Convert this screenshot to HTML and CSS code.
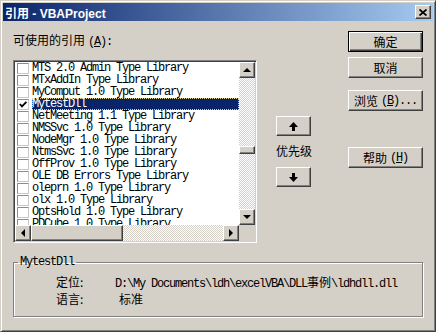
FILE: index.html
```html
<!DOCTYPE html>
<html>
<head>
<meta charset="utf-8">
<link rel="stylesheet" href="styles.css">
</head>
<body>
<div class="window">
  <div class="titlebar">
    <span class="title">引用 - VBAProject</span>
    <span class="close raised"><svg width="8" height="7" viewBox="0 0 8 7"><path d="M0.5 0.5 L7.5 6.5 M7.5 0.5 L0.5 6.5" stroke="#000" stroke-width="1.7" fill="none"/></svg></span>
  </div>
  <div class="body">
    <div class="main">
      <div class="leftcol">
        <div class="label">可使用的引用<span class="m acc">(<u>A</u>):</span></div>
        <div class="listbox">
          <div class="items m">
            <div class="row"><span class="cb"></span><span class="txt">MTS 2.0 Admin Type Library</span></div>
            <div class="row"><span class="cb"></span><span class="txt">MTxAddIn Type Library</span></div>
            <div class="row"><span class="cb"></span><span class="txt">MyComput 1.0 Type Library</span></div>
            <div class="row"><span class="cb"><svg width="8" height="7" viewBox="0 0 8 7"><path d="M0.8 3 L3 5.4 L7.4 0.8" stroke="#000" stroke-width="1.8" fill="none"/></svg></span><span class="txt sel">MytestDll</span></div>
            <div class="row"><span class="cb"></span><span class="txt">NetMeeting 1.1 Type Library</span></div>
            <div class="row"><span class="cb"></span><span class="txt">NMSSvc 1.0 Type Library</span></div>
            <div class="row"><span class="cb"></span><span class="txt">NodeMgr 1.0 Type Library</span></div>
            <div class="row"><span class="cb"></span><span class="txt">NtmsSvc 1.0 Type Library</span></div>
            <div class="row"><span class="cb"></span><span class="txt">OffProv 1.0 Type Library</span></div>
            <div class="row"><span class="cb"></span><span class="txt">OLE DB Errors Type Library</span></div>
            <div class="row"><span class="cb"></span><span class="txt">oleprn 1.0 Type Library</span></div>
            <div class="row"><span class="cb"></span><span class="txt">olx 1.0 Type Library</span></div>
            <div class="row"><span class="cb"></span><span class="txt">OptsHold 1.0 Type Library</span></div>
            <div class="row"><span class="cb"></span><span class="txt">PDCube 1.0 Type Library</span></div>
          </div>
          <div class="vscroll">
            <span class="sbtn raised"><i class="tri up"></i></span>
            <div class="vtrack"><span class="vthumb raised"></span></div>
            <span class="sbtn raised"><i class="tri down"></i></span>
          </div>
          <div class="hscroll">
            <span class="sbtn raised"><i class="tri left"></i></span>
            <span class="hthumb raised"></span>
            <span class="htrack"></span>
            <span class="sbtn raised"><i class="tri right"></i></span>
          </div>
          <div class="corner"></div>
        </div>
      </div>
      <div class="midcol">
        <span class="pbtn raised"><svg width="9" height="9" viewBox="0 0 9 9"><path d="M4.5 0 L9 5 H6 V9 H3 V5 H0 Z" fill="#000"/></svg></span>
        <div class="plabel">优先级</div>
        <span class="pbtn raised"><svg width="9" height="9" viewBox="0 0 9 9"><path d="M4.5 9 L9 4 H6 V0 H3 V4 H0 Z" fill="#000"/></svg></span>
      </div>
      <div class="rightcol">
        <span class="btn default">确定</span>
        <span class="btn raised b2">取消</span>
        <span class="btn raised b3">浏览<span class="m acc">(<u>B</u>)...</span></span>
        <span class="btn raised b4">帮助<span class="m acc">(<u>H</u>)</span></span>
      </div>
    </div>
    <fieldset class="group">
      <legend class="m">MytestDll</legend>
      <div class="info"><span class="k">定位:</span><span class="v m">D:\My Documents\ldh\excelVBA\DLL<span class="cjk">事例</span>\ldhdll.dll</span></div>
      <div class="info"><span class="k">语言:</span><span class="v lang">标准</span></div>
    </fieldset>
  </div>
</div>
</body>
</html>
```

FILE: styles.css
```css
body {
  margin: 0;
  background: #fff;
  font: 12px "Noto Sans CJK SC", sans-serif;
  color: #000;
}

.m {
  font-family: "Liberation Mono", "Noto Sans CJK SC", monospace;
  letter-spacing: -1.2px;
}

.cjk {
  font-family: "Noto Sans CJK SC", sans-serif;
  letter-spacing: 0;
}

.acc {
  margin-left: 3px;
}

.raised {
  box-sizing: border-box;
  background: #d4d0c8;
  border: 1px solid;
  border-color: #fff #404040 #404040 #fff;
  box-shadow: inset -1px -1px #808080;
}

.window {
  width: 436px;
  height: 332px;
  box-sizing: border-box;
  background: #d4d0c8;
  border: 1px solid;
  border-color: #d4d0c8 #404040 #404040 #d4d0c8;
  box-shadow: inset 1px 1px #fff, inset -1px -1px #808080;
  padding: 2px;
  display: flex;
  flex-direction: column;
}

.titlebar {
  height: 18px;
  flex: none;
  display: flex;
  align-items: center;
  justify-content: space-between;
  padding: 0 2px;
  background: linear-gradient(to right, #0a246a, #a6caf0);
  color: #fff;
  font: bold 12px "Liberation Sans", "Noto Sans CJK SC", sans-serif;
}

.close {
  width: 16px;
  height: 14px;
  display: flex;
  align-items: center;
  justify-content: center;
}

.body {
  padding: 0 10px;
  display: flex;
  flex-direction: column;
}

.main {
  display: flex;
  height: 222px;
}

.leftcol {
  width: 244px;
  padding-top: 12px;
}

.label {
  line-height: 14px;
  height: 14px;
  margin-bottom: 13px;
}

.listbox {
  width: 244px;
  height: 183px;
  box-sizing: border-box;
  border: 1px solid;
  border-color: #808080 #fff #fff #808080;
  box-shadow: inset 1px 1px #404040, inset -1px -1px #d4d0c8;
  padding: 1px;
  background: #fff;
  display: grid;
  grid-template-columns: 1fr 16px;
  grid-template-rows: 1fr 16px;
}

.items {
  overflow: hidden;
  background: #fff;
}

.row {
  display: flex;
  align-items: center;
  height: 12px;
}

.cb {
  width: 12px;
  height: 11px;
  box-sizing: border-box;
  border: 1px solid;
  border-color: #8c8c8c #c8c8c8 #c8c8c8 #8c8c8c;
  margin: 0 3px 0 2px;
  display: flex;
  align-items: center;
  justify-content: center;
  flex: none;
}

.txt {
  flex: 1;
  height: 12px;
  line-height: 12px;
  white-space: nowrap;
}

.sel {
  background: #0a246a;
  color: #fff;
  outline: 1px dotted #d8d098;
  outline-offset: -1px;
}

.vscroll {
  display: flex;
  flex-direction: column;
}

.sbtn {
  width: 16px;
  height: 16px;
  flex: none;
  display: flex;
  align-items: center;
  justify-content: center;
}

.vtrack, .htrack {
  flex: 1;
  background: repeating-conic-gradient(#fff 0 25%, #d4d0c8 0 50%) 0 0 / 2px 2px;
}

.vthumb {
  display: block;
  height: 8px;
  margin-top: 68px;
}

.hscroll {
  display: flex;
}

.hthumb {
  width: 92px;
  flex: none;
}

.corner {
  background: #d4d0c8;
}

.tri {
  width: 0;
  height: 0;
  display: block;
}
.tri.up {
  border-left: 4px solid transparent;
  border-right: 4px solid transparent;
  border-bottom: 4px solid #000;
}
.tri.down {
  border-left: 4px solid transparent;
  border-right: 4px solid transparent;
  border-top: 4px solid #000;
}
.tri.left {
  border-top: 4px solid transparent;
  border-bottom: 4px solid transparent;
  border-right: 4px solid #000;
}
.tri.right {
  border-top: 4px solid transparent;
  border-bottom: 4px solid transparent;
  border-left: 4px solid #000;
}

.midcol {
  width: 35px;
  margin-left: 19px;
  padding-top: 95px;
  display: flex;
  flex-direction: column;
}

.pbtn {
  width: 35px;
  height: 20px;
  display: flex;
  align-items: center;
  justify-content: center;
}

.plabel {
  height: 31px;
  line-height: 29px;
  text-align: center;
  white-space: nowrap;
}

.rightcol {
  width: 75px;
  margin-left: 37px;
  padding-top: 10px;
  display: flex;
  flex-direction: column;
}

.btn {
  height: 21px;
  display: flex;
  align-items: center;
  justify-content: center;
  line-height: 14px;
  white-space: nowrap;
}

.default {
  box-sizing: border-box;
  background: #d4d0c8;
  border: 1px solid #000;
  box-shadow: inset 1px 1px #fff, inset -1px -1px #404040, inset -2px -2px #808080;
}

.b2 { margin-top: 5px; }
.b3 { margin-top: 12px; }
.b4 { margin-top: 36px; }

.group {
  margin: 12px 0 0;
  padding: 4px 0 9px 0;
  border: 1px solid #808080;
  box-shadow: inset 1px 1px #fff, 1px 1px #fff;
  min-width: 0;
}

.group legend {
  padding: 0 2px;
  margin-left: 4px;
  line-height: 14px;
}

.info {
  height: 17px;
  line-height: 17px;
  padding-left: 42px;
  display: flex;
  white-space: nowrap;
}

.k {
  width: 59px;
  flex: none;
}

.lang {
  padding-left: 4px;
}
```
